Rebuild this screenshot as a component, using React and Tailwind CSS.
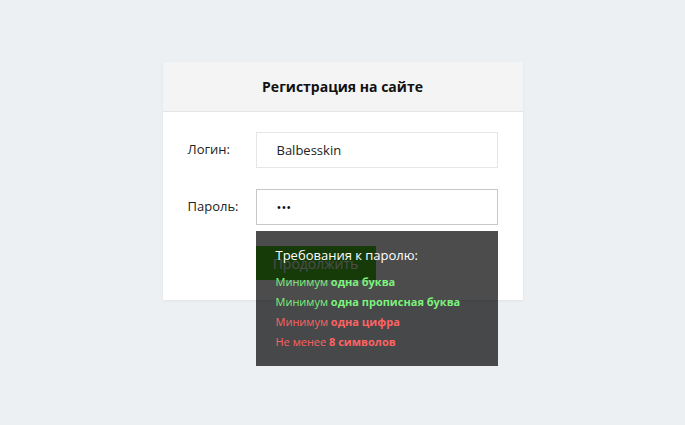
import React from 'react';

const rules = [
  { ok: true, pre: 'Минимум', strong: 'одна буква' },
  { ok: true, pre: 'Минимум', strong: 'одна прописная буква' },
  { ok: false, pre: 'Минимум', strong: 'одна цифра' },
  { ok: false, pre: 'Не менее', strong: '8 символов' },
];

export default function App() {
  return (
    <div
      className="min-h-screen w-full bg-[#edf0f3] pt-[62px]"
      style={{ fontFamily: '"Open Sans", "Noto Sans", sans-serif' }}
    >
      <div className="mx-auto w-[360px] bg-white shadow-[0_1px_3px_rgba(0,0,0,0.06)]">
        <div className="h-[50px] bg-[#f4f4f4] border-b border-[#e4e4e4] flex items-center justify-center">
          <h1 className="text-[14px] font-bold text-[#111]">Регистрация на сайте</h1>
        </div>

        <form className="px-[25px] pt-[20px] pb-[20px] flex flex-col gap-[21px]">
          <div className="flex items-center">
            <label className="w-[68px] text-[13px] text-[#222]">Логин:</label>
            <input
              className="w-[242px] h-[36px] border border-[#e6e6e6] px-[20px] text-[13px] text-[#222] outline-none"
              defaultValue="Balbesskin"
            />
          </div>

          <div className="relative flex items-center">
            <label className="w-[68px] text-[13px] text-[#222]">Пароль:</label>
            <input
              type="password"
              className="w-[242px] h-[36px] border border-[#c8c8c8] px-[20px] text-[13px] text-[#111] outline-none"
              defaultValue="abc"
            />

            {/* Password hint */}
            <div className="absolute left-[68px] top-[42px] z-10 w-[242px] h-[135px] bg-black/70 pl-[20px] pt-[15px]">
              <div className="text-[13px] text-white mb-[6px]">Требования к паролю:</div>
              <ul className="flex flex-col">
                {rules.map((r) => (
                  <li
                    key={r.strong}
                    className={`text-[11px] leading-[20px] ${r.ok ? 'text-[#7cf27c]' : 'text-[#ff6262]'}`}
                  >
                    {r.pre} <b className="font-bold">{r.strong}</b>
                  </li>
                ))}
              </ul>
            </div>
          </div>

          <div className="flex">
            <div className="w-[68px]" />
            <button
              type="button"
              className="w-[120px] h-[34px] bg-[#4fc421] text-white text-[14px]"
            >
              Продолжить
            </button>
          </div>
        </form>
      </div>
    </div>
  );
}
